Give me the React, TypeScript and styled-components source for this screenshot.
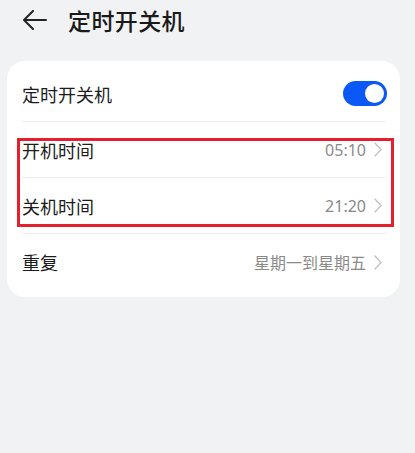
import { FC } from "react";
import styled, { createGlobalStyle } from "styled-components";

const GlobalStyle = createGlobalStyle`
  html, body {
    margin: 0;
    padding: 0;
    background: #f1f2f4;
    font-family: "Noto Sans CJK SC", "Noto Sans", sans-serif;
  }
`;

const Page = styled.div`
  width: 415px;
  height: 453px;
  background: #f1f2f4;
  box-sizing: border-box;
  position: relative;
`;

const Header = styled.div`
  display: flex;
  align-items: center;
  height: 40px;
  padding-left: 22px;
  gap: 20px;
`;

const BackButton = styled.button`
  border: none;
  background: none;
  padding: 0;
  width: 26px;
  height: 22px;
  display: flex;
  align-items: center;
  cursor: pointer;
`;

const Title = styled.h1`
  margin: 0;
  font-size: 23px;
  font-weight: 500;
  color: #1a1a1a;
  letter-spacing: 0.4px;
`;

const Card = styled.div`
  position: relative;
  margin: 21px 15px 0 7px;
  background: #fff;
  border-radius: 18px;
  padding: 5px 14px 7px 15px;
`;

const Row = styled.div<{ $last?: boolean }>`
  display: flex;
  align-items: center;
  justify-content: space-between;
  height: ${(p) => (p.$last ? "56px" : "55px")};
  border-bottom: ${(p) => (p.$last ? "none" : "1px solid #ebebeb")};
`;

const Label = styled.span`
  font-size: 18px;
  color: #1c1c1c;
`;

const Value = styled.span`
  display: flex;
  align-items: center;
  gap: 8px;
  padding-right: 4px;
  font-size: 16px;
  color: #8a8a8a;
  font-family: "Noto Sans", "Noto Sans CJK SC", sans-serif;
`;

const ValueCjk = styled.span`
  font-family: "Noto Sans CJK SC", sans-serif;
`;

const Toggle = styled.div<{ $on: boolean }>`
  width: 44px;
  height: 25px;
  border-radius: 13px;
  background: ${(p) => (p.$on ? "#0a59f7" : "#ccc")};
  display: flex;
  align-items: center;
  justify-content: ${(p) => (p.$on ? "flex-end" : "flex-start")};
  padding: 0 3px;
  box-sizing: border-box;
  margin-right: -1px;
`;

const Knob = styled.div`
  width: 19px;
  height: 19px;
  border-radius: 50%;
  background: #fff;
`;

const Highlight = styled.div`
  position: absolute;
  left: 10px;
  top: 77px;
  width: 377px;
  height: 89px;
  border: 3px solid #e4202e;
  box-sizing: border-box;
  pointer-events: none;
`;

const Chevron: FC = () => (
  <svg width="8" height="15" viewBox="0 0 8 15">
    <path d="M1 1l6 6.5-6 6.5" fill="none" stroke="#c4c4c4" strokeWidth="1.4" strokeLinecap="round" strokeLinejoin="round" />
  </svg>
);

const App: FC = () => {
  return (
    <Page>
      <GlobalStyle />
      <Header>
        <BackButton>
          <svg width="26" height="20" viewBox="0 0 26 20">
            <path d="M24 10H2M11 1L2 10l9 9" fill="none" stroke="#222" strokeWidth="2" strokeLinecap="round" strokeLinejoin="round" />
          </svg>
        </BackButton>
        <Title>定时开关机</Title>
      </Header>
      <Card>
        <Row>
          <Label>定时开关机</Label>
          <Toggle $on>
            <Knob />
          </Toggle>
        </Row>
        <Row>
          <Label>开机时间</Label>
          <Value>
            05:10 <Chevron />
          </Value>
        </Row>
        <Row>
          <Label>关机时间</Label>
          <Value>
            21:20 <Chevron />
          </Value>
        </Row>
        <Row $last>
          <Label>重复</Label>
          <Value>
            <ValueCjk>星期一到星期五</ValueCjk> <Chevron />
          </Value>
        </Row>
        <Highlight />
      </Card>
    </Page>
  );
};

export default App;
